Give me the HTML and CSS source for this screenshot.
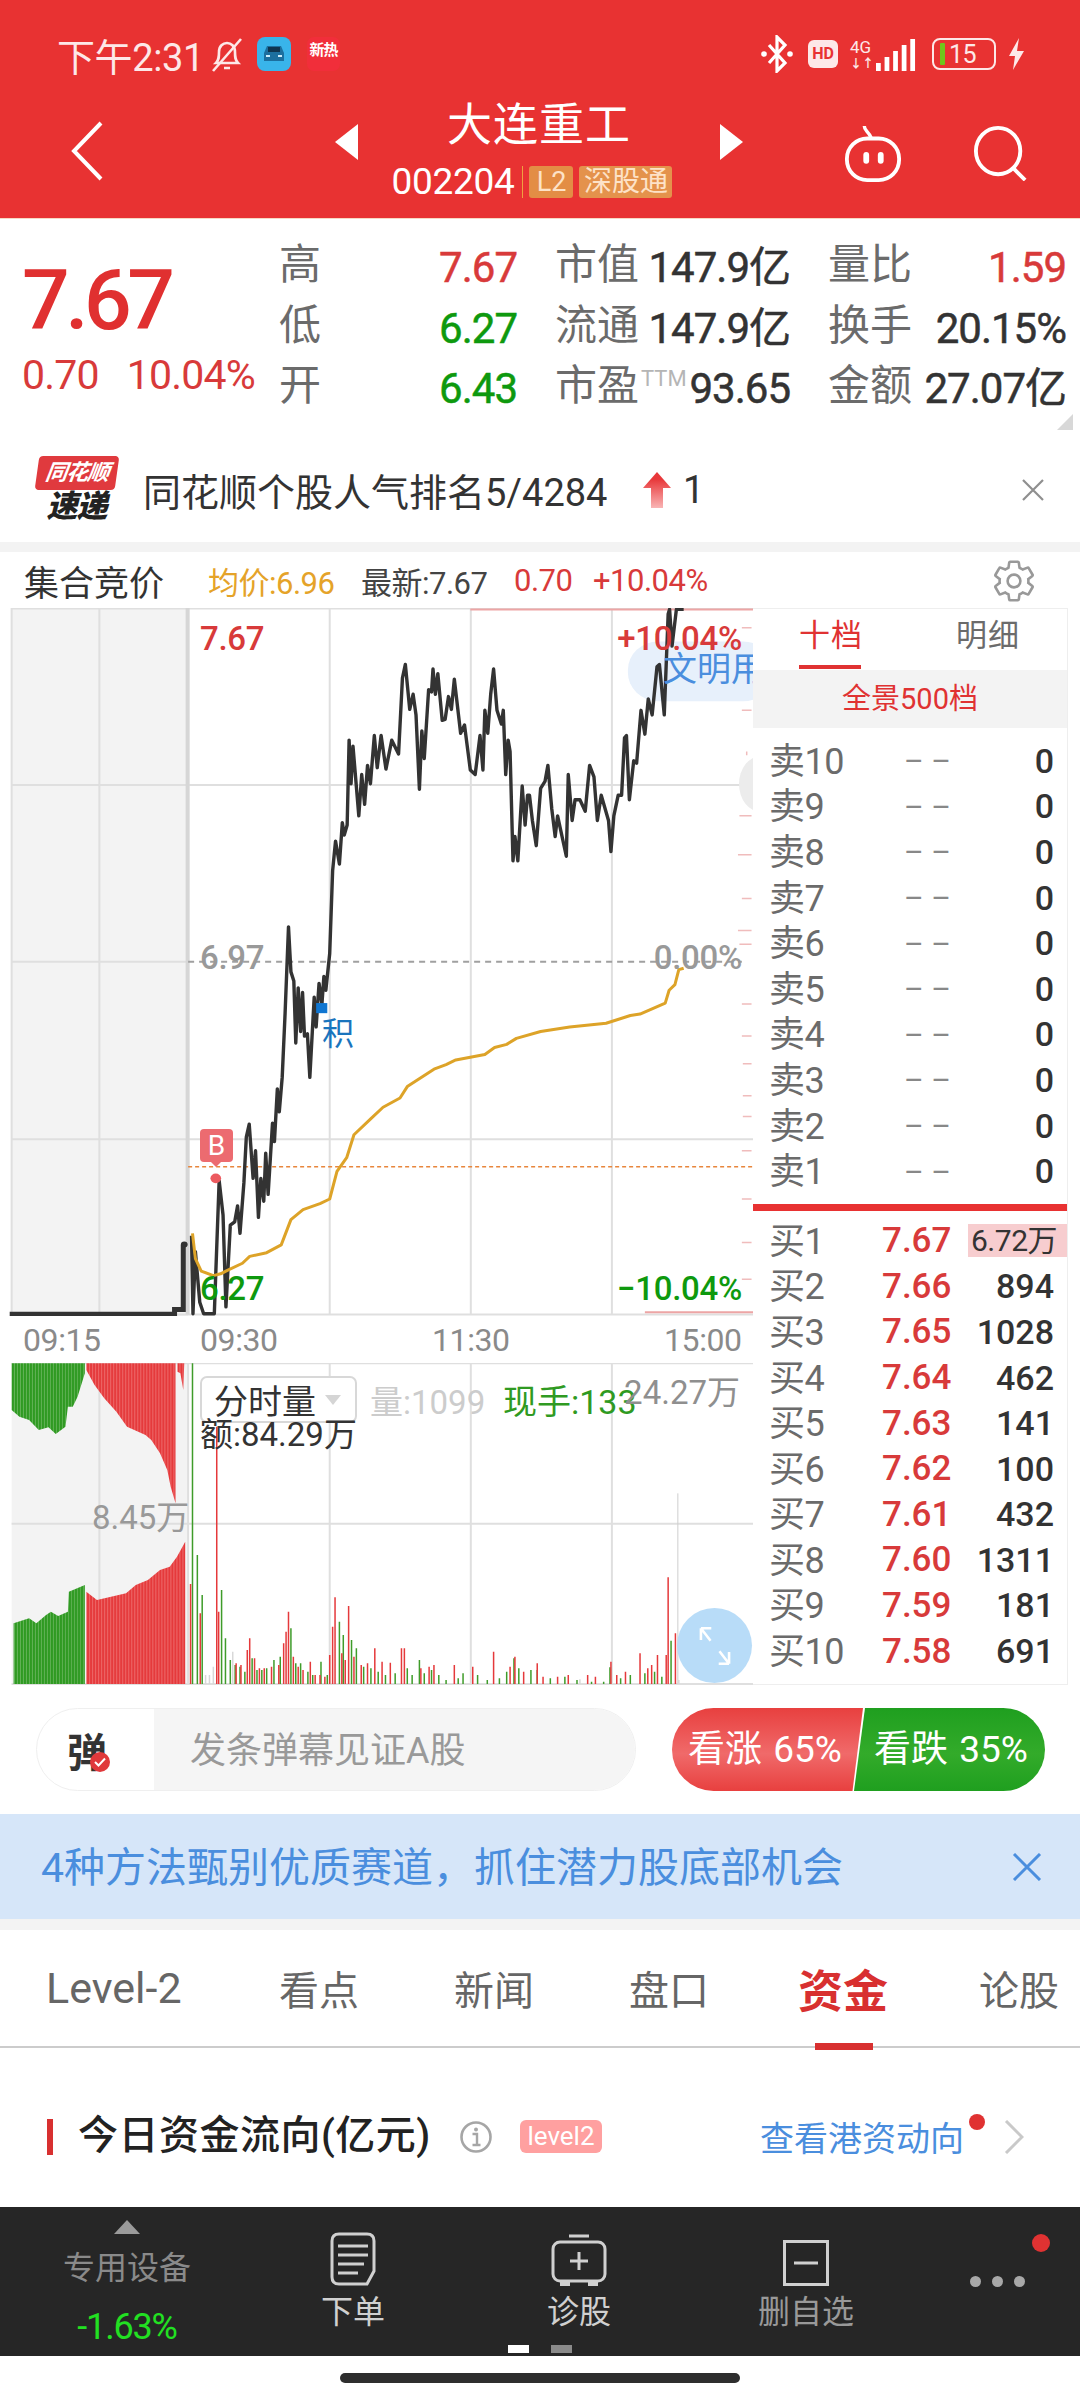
FILE: index.html
```html
<!DOCTYPE html>
<html lang="zh-CN">
<head>
  <meta charset="UTF-8" />
  <meta name="viewport" content="width=device-width, initial-scale=1.0"/>
  <title>大连重工</title>
  <link rel="stylesheet" href="styles.css">
</head>
<body>
<div class="page">

  <header class="top">
    <div class="status">
      <div class="status-left">
        <span class="clock">下午2:31</span>
        <svg class="bell" viewBox="0 0 34 36"><path d="M6 27c3-3 3-6 3-11 0-6 4-9 8-9s8 3 8 9c0 5 0 8 3 11z M14 32h6" fill="none" stroke="#fde8e8" stroke-width="2.6"/><path d="M3 35 31 3" stroke="#fde8e8" stroke-width="2.6"/></svg>
        <svg class="app-icon" viewBox="0 0 34 34"><rect width="34" height="34" rx="8" fill="#39b4ea"/><path d="M7 16l3-7h14l3 7v8H7z" fill="#1c6f9f"/><rect x="11" y="10" width="12" height="5" fill="#0f3550"/><rect x="9" y="18" width="4" height="2" fill="#cfeefc"/><rect x="21" y="18" width="4" height="2" fill="#cfeefc"/></svg>
        <span class="app-hot">新热</span>
      </div>
      <div class="status-right">
        <svg class="bt" viewBox="0 0 34 38"><path d="M9 10l16 18-8 8V2l8 8-16 18" fill="none" stroke="#fff" stroke-width="3.2"/><circle cx="4" cy="19" r="2.8" fill="#fff"/><circle cx="30" cy="19" r="2.8" fill="#fff"/></svg>
        <span class="hd">HD</span>
        <span class="net"><i>4G</i><b>↓↑</b></span>
        <svg class="signal" viewBox="0 0 42 32" preserveAspectRatio="none"><rect x="0" y="24" width="5" height="8" fill="#fff"/><rect x="9" y="18" width="5" height="14" fill="#fff"/><rect x="18" y="12" width="5" height="20" fill="#fff"/><rect x="27" y="6" width="5" height="26" fill="#fff"/><rect x="36" y="0" width="5" height="32" fill="#fff"/></svg>
        <span class="battery"><i></i>15</span>
        <svg class="bolt" viewBox="0 0 17 32"><path d="M11 0 1 18h6l-2 14 11-19H9z" fill="#fde8e8"/></svg>
      </div>
    </div>
    <nav class="nav">
      <svg class="back" viewBox="0 0 34 60"><path d="M31 2 4 30l27 28" fill="none" stroke="#fff" stroke-width="4"/></svg>
      <div class="stock-head">
        <svg class="tri" viewBox="0 0 23 36"><path d="M23 0v36L0 18z" fill="#fff"/></svg>
        <div class="stock-id">
          <div class="stock-name">大连重工</div>
          <div class="stock-code"><span>002204</span><em>L2</em><em>深股通</em></div>
        </div>
        <svg class="tri" viewBox="0 0 23 36"><path d="M0 0v36l23-18z" fill="#fff"/></svg>
      </div>
      <div class="nav-right">
        <svg class="robot" viewBox="0 0 60 60"><path d="M21 1c0 5 4 5 7 12" fill="none" stroke="#fff" stroke-width="3.5"/><rect x="3" y="14" width="54" height="43" rx="21" fill="none" stroke="#fff" stroke-width="4"/><rect x="20" y="28" width="6" height="12" rx="3" fill="#fff"/><rect x="35" y="28" width="6" height="12" rx="3" fill="#fff"/></svg>
        <svg class="search" viewBox="0 0 58 58"><ellipse cx="26" cy="27" rx="23" ry="24" fill="none" stroke="#fff" stroke-width="4"/><path d="M41 44l13 13" stroke="#fff" stroke-width="4"/></svg>
      </div>
    </nav>
  </header>

  <section class="quote">
    <div class="quote-main">
      <div class="quote-price">7.67</div>
      <div class="quote-change"><span>0.70</span><span>10.04%</span></div>
    </div>
    <div class="quote-grid">
      <div class="cell"><label>高</label><b class="up">7.67</b></div>
      <div class="cell"><label>市值</label><b>147.9亿</b></div>
      <div class="cell"><label>量比</label><b class="up">1.59</b></div>
      <div class="cell"><label>低</label><b class="down">6.27</b></div>
      <div class="cell"><label>流通</label><b>147.9亿</b></div>
      <div class="cell"><label>换手</label><b>20.15%</b></div>
      <div class="cell"><label>开</label><b class="down">6.43</b></div>
      <div class="cell"><label>市盈<sup>TTM</sup></label><b>93.65</b></div>
      <div class="cell"><label>金额</label><b>27.07亿</b></div>
    </div>
    <i class="corner"></i>
  </section>

  <section class="ticker">
    <div class="logo"><span class="logo-tag">同花顺</span><span class="logo-sub">速递</span></div>
    <span class="ticker-text">同花顺个股人气排名5/4284</span>
    <svg class="rank-arrow" viewBox="0 0 28 36"><defs><linearGradient id="rank" x1="0" y1="0" x2="0" y2="1"><stop offset="0.2" stop-color="#e8383a"/><stop offset="1" stop-color="#f9b5b5"/></linearGradient></defs><path d="M14 0l14 16H20v20H8V16H0z" fill="url(#rank)"/></svg>
    <span class="rank-num">1</span>
    <svg class="close-x" viewBox="0 0 24 22"><path d="M2 1l20 20M22 1 2 21" stroke="#8f8f8f" stroke-width="2.2"/></svg>
  </section>

  <div class="strip"></div>

  <section class="chart-info">
    <span class="auction">集合竞价</span>
    <span class="avg">均价:6.96</span>
    <span class="last">最新:7.67</span>
    <span class="chg">0.70</span>
    <span class="chg">+10.04%</span>
    <svg class="gear" viewBox="0 0 24 24"><path d="M19.14 12.94c.04-.3.06-.61.06-.94 0-.32-.02-.64-.07-.94l2.03-1.58a.49.49 0 0 0 .12-.61l-1.92-3.32a.488.488 0 0 0-.59-.22l-2.39.96c-.5-.38-1.03-.7-1.62-.94l-.36-2.54a.484.484 0 0 0-.48-.41h-3.84c-.24 0-.43.17-.47.41l-.36 2.54c-.59.24-1.13.57-1.62.94l-2.39-.96c-.22-.08-.47 0-.59.22L2.74 8.87c-.12.21-.08.47.12.61l2.03 1.58c-.05.3-.09.63-.09.94s.02.64.07.94l-2.03 1.58a.49.49 0 0 0-.12.61l1.92 3.32c.12.22.37.29.59.22l2.39-.96c.5.38 1.03.7 1.62.94l.36 2.54c.05.24.24.41.48.41h3.84c.24 0 .44-.17.47-.41l.36-2.54c.59-.24 1.13-.56 1.62-.94l2.39.96c.22.08.47 0 .59-.22l1.92-3.32c.12-.22.07-.47-.12-.61l-2.01-1.58z" fill="none" stroke="#999" stroke-width="1.3"/><circle cx="12" cy="12" r="3.2" fill="none" stroke="#999" stroke-width="1.3"/></svg>
  </section>

  <section class="market">
    <div class="charts">

      <div class="price-chart">
        <svg class="plot" viewBox="0 17 1553 1543" preserveAspectRatio="none">
          <rect x="24" y="17" width="364" height="1543" fill="#f3f3f3"/>
          <g class="grid">
            <path d="M24 18H1553M24 403H1553M24 1175H1553M24 1557H1553"/>
            <path d="M24 788H388"/>
            <path d="M24 17V1557M205 17V1557M388 17V1557M680 17V1557M971 17V1557M1262 17V1557"/>
            <path class="grid-strong" d="M387 17V1557"/>
          </g>
          <path class="limit" d="M970 20H1553M1330 1552H1553"/>
          <rect x="1295" y="90" width="300" height="130" rx="62" fill="#e7f0fb"/>
          <path class="ticks" d="M1530 60h20M1540 140v10M1530 240h20M1540 330v8M1525 470h25M1522 555h28M1530 650h20M1522 720h28M1525 750h25M1530 880h20M1530 950h20M1532 1010h18M1532 1080h18M1532 1125h18M1530 1200h20M1530 1305h20M1530 1400h20M1530 1480h20"/>
          <rect x="1556" y="1315" width="12" height="18" fill="#e83232"/>
          <path class="ref-line" d="M388 788H1530"/>
          <path class="cost-line" d="M388 1235H1553"/>
          <path class="pre-line" d="M20 1556H360V1546H378V1405"/>
          <path class="price-line" d="M395 1385 398 1555 403 1420 412 1530 420 1555 442 1555 452 1265 460 1340 466 1540 475 1362 484 1355 490 1320 495 1380 503 1270 508 1170 514 1142 522 1260 527 1200 533 1345 538 1260 544 1310 548 1205 553 1295 562 1140 566 1180 572 1065 576 1115 582 1040 588 900 595 712 600 810 606 830 610 965 615 845 620 940 624 855 628 950 634 945 639 1040 648 865 652 930 658 835 664 880 668 820 672 850 680 770 686 590 692 525 700 575 706 485 710 512 716 490 720 305 724 400 728 318 740 470 746 380 752 445 758 360 764 400 772 295 778 365 786 295 796 368 808 305 822 335 830 170 836 140 845 238 852 205 858 250 865 412 870 285 875 345 884 195 890 200 893 150 898 205 903 160 912 262 918 260 925 210 931 238 937 172 950 290 958 272 970 370 980 380 990 295 996 370 1000 240 1006 290 1012 205 1018 150 1025 240 1034 270 1038 240 1043 380 1048 305 1052 330 1058 568 1062 515 1068 568 1077 405 1083 490 1088 425 1092 425 1098 480 1106 535 1115 410 1124 395 1130 360 1138 455 1145 515 1150 470 1168 558 1172 380 1180 480 1186 435 1196 435 1207 460 1216 360 1225 385 1232 480 1240 425 1255 480 1260 548 1266 470 1275 425 1282 425 1288 300 1292 295 1298 435 1307 350 1313 355 1322 240 1330 292 1337 215 1345 250 1355 145 1360 140 1370 250 1378 30 1381 20 1386 100 1395 20 1410 20"/>
          <path class="avg-line" d="M397 1380 403 1435 415 1462 440 1472 455 1468 470 1460 500 1445 515 1430 550 1422 580 1405 600 1350 625 1328 660 1315 680 1305 695 1245 715 1215 730 1165 765 1130 790 1105 825 1085 840 1060 895 1022 920 1012 940 1002 1000 990 1020 975 1045 968 1065 955 1115 940 1175 930 1250 922 1300 905 1320 902 1372 878 1380 850 1392 838 1400 805 1410 802"/>
          <ellipse cx="445" cy="1260" rx="11" ry="10.5" fill="#ec5a5f"/>
          <ellipse cx="380" cy="1404" rx="7" ry="6.5" fill="#333"/>
          <rect x="652" y="878" width="23" height="22" fill="#1076d1"/>
        </svg>
        <i class="side-knob"></i>
        <span class="float-pill">文明用</span>
        <span class="tag tag-hi-price">7.67</span>
        <span class="tag tag-hi-pct">+10.04%</span>
        <span class="tag tag-mid-price">6.97</span>
        <span class="tag tag-mid-pct">0.00%</span>
        <span class="tag tag-lo-price">6.27</span>
        <span class="tag tag-lo-pct">−10.04%</span>
        <span class="buy-mark">B</span>
        <span class="accum">积</span>
      </div>

      <div class="time-axis"><span>09:15</span><span>09:30</span><span>11:30</span><span>15:00</span></div>

      <div class="volume-chart">
        <svg class="plot" viewBox="0 159 1553 966" preserveAspectRatio="none">
          <defs>
            <pattern id="stripeGreen" width="6.2" height="10" patternUnits="userSpaceOnUse"><rect width="6.2" height="10" fill="#6cb761"/><rect width="4.4" height="10" fill="#2f9a22"/></pattern>
            <pattern id="stripeRed" width="6.2" height="10" patternUnits="userSpaceOnUse"><rect width="6.2" height="10" fill="#f07a7a"/><rect width="4.4" height="10" fill="#e5393b"/></pattern>
          </defs>
          <rect x="24" y="159" width="364" height="966" fill="#f3f3f3"/>
          <g class="grid">
            <path d="M24 641H1553M24 1122H1553M24 160H1553"/>
            <path d="M205 159V1122M388 159V1122M680 159V1122M971 159V1122M1262 159V1122"/>
          </g>
          <path fill="url(#stripeGreen)" d="M24 160H175V190L160 260 150 290H140L135 350 115 372 100 352 80 360 60 330 40 320 24 300Z"/>
          <path fill="url(#stripeRed)" d="M178 160H362V580L352 530 345 480 330 430 312 390 300 375 262 350 240 305 215 265 195 225 178 180Z"/>
          <path fill="url(#stripeRed)" d="M366 160H380L378 240 372 190 366 185Z"/>
          <path fill="url(#stripeGreen)" d="M28 1122V940L60 925 75 940 95 915 105 905 120 918 140 905 142 845 175 825V1122Z"/>
          <path fill="url(#stripeRed)" d="M178 1122V845L200 870 260 850 280 825 305 810 330 780 350 770 365 740 382 695V1122Z"/>
          <path class="vol-line" d="M1398 550V1122"/>
          <path class="vol-soft" d="M424 1095V1122M432 1095V1122M440 1070V1122M480 1025V1122M1196 1108V1122M1400 1110V1122"/>
          <path class="vol-green" d="M397 160V1122M407 735V1122M417 855V1122M457 840V1122M465 985V1122M475 1050V1122M485 1065V1122M495 1070V1122M505 1085V1122M520 1045V1122M530 1080V1122M540 1080V1122M550 1075V1122M565 1050V1122M578 1040V1122M600 955V1122M610 1060V1122M620 1060V1122M635 1085V1122M645 1095V1122M662 1055V1122M675 1095V1122M700 935V1122M708 975V1122M725 990V1122M735 1015V1122M750 1070V1122M765 1075V1122M780 1085V1122M795 1095V1122M815 1090V1122M840 1075V1122M850 1095V1122M865 1050V1122M875 1090V1122M890 1080V1122M905 1095V1122M920 1110V1122M945 1105V1122M955 1090V1122M985 1095V1122M1005 1110V1122M1030 1105V1122M1045 1085V1122M1060 1045V1122M1070 1075V1122M1095 1080V1122M1108 1080V1122M1135 1105V1122M1165 1100V1122M1190 1110V1122M1220 1115V1122M1245 1115V1122M1258 1072V1122M1280 1105V1122M1300 1095V1122M1330 1090V1122M1350 1085V1122M1365 1100V1122M1384 992V1122"/>
          <path class="vol-red" d="M393 822V1122M413 910V1122M447 350V1122M451 905V1122M487 1060V1122M497 1065V1122M510 1020V1122M515 985V1122M525 1045V1122M535 1075V1122M545 1075V1122M560 1070V1122M575 1065V1122M585 1000V1122M590 965V1122M595 905V1122M605 1040V1122M615 1070V1122M625 1080V1122M640 1055V1122M650 1095V1122M660 1095V1122M670 1100V1122M680 1035V1122M686 950V1122M691 862V1122M705 1030V1122M712 1050V1122M719 888V1122M730 1040V1122M745 1065V1122M758 1060V1122M773 1015V1122M788 1055V1122M805 1058V1122M828 1015V1122M834 1015V1122M868 1075V1122M885 1070V1122M895 1065V1122M937 1065V1122M975 1070V1122M1018 1025V1122M1052 1070V1122M1062 1040V1122M1080 1085V1122M1108 1060V1122M1120 1100V1122M1150 1100V1122M1172 1095V1122M1212 1095V1122M1228 1100V1122M1260 1055V1122M1272 1095V1122M1290 1085V1122M1320 1030V1122M1336 1075V1122M1344 1065V1122M1356 1035V1122M1374 1035V1122M1378 802V1122M1393 970V1122"/>
        </svg>
        <div class="vol-head">
          <span class="vol-select">分时量<i></i></span>
          <span class="vol-qty">量:1099</span>
          <span class="vol-hand">现手:133</span>
        </div>
        <span class="vol-amount">额:84.29万</span>
        <span class="vol-top">24.27万</span>
        <span class="vol-mid">8.45万</span>
        <span class="expand">
          <svg viewBox="0 0 44 54"><path d="M3 3h14M3 3v16M3 3l13 17M41 51H27M41 51V35M41 51 28 34" fill="none" stroke="#fff" stroke-width="3.5"/></svg>
        </span>
      </div>
    </div>

    <aside class="book">
      <div class="book-tabs"><span class="book-tab active">十档</span><span class="book-tab">明细</span></div>
      <div class="book-band">全景500档</div>
      <div class="book-rows sell">
        <div class="row"><span>卖10</span><em>– –</em><b>0</b></div>
        <div class="row"><span>卖9</span><em>– –</em><b>0</b></div>
        <div class="row"><span>卖8</span><em>– –</em><b>0</b></div>
        <div class="row"><span>卖7</span><em>– –</em><b>0</b></div>
        <div class="row"><span>卖6</span><em>– –</em><b>0</b></div>
        <div class="row"><span>卖5</span><em>– –</em><b>0</b></div>
        <div class="row"><span>卖4</span><em>– –</em><b>0</b></div>
        <div class="row"><span>卖3</span><em>– –</em><b>0</b></div>
        <div class="row"><span>卖2</span><em>– –</em><b>0</b></div>
        <div class="row"><span>卖1</span><em>– –</em><b>0</b></div>
      </div>
      <div class="book-divider"></div>
      <div class="book-rows buy">
        <div class="row"><span>买1</span><strong>7.67</strong><b class="book-hot">6.72万</b></div>
        <div class="row"><span>买2</span><strong>7.66</strong><b>894</b></div>
        <div class="row"><span>买3</span><strong>7.65</strong><b>1028</b></div>
        <div class="row"><span>买4</span><strong>7.64</strong><b>462</b></div>
        <div class="row"><span>买5</span><strong>7.63</strong><b>141</b></div>
        <div class="row"><span>买6</span><strong>7.62</strong><b>100</b></div>
        <div class="row"><span>买7</span><strong>7.61</strong><b>432</b></div>
        <div class="row"><span>买8</span><strong>7.60</strong><b>1311</b></div>
        <div class="row"><span>买9</span><strong>7.59</strong><b>181</b></div>
        <div class="row"><span>买10</span><strong>7.58</strong><b>691</b></div>
      </div>
    </aside>
  </section>

  <section class="comment-bar">
    <div class="danmu">
      <div class="danmu-mark">弹<i><svg viewBox="0 0 12 10"><path d="M1 5l3.5 3.5L11 1.5" fill="none" stroke="#fff" stroke-width="2"/></svg></i></div>
      <div class="danmu-input">发条弹幕见证A股</div>
    </div>
    <div class="vote">
      <span class="vote-up">看涨 65%</span>
      <span class="vote-down">看跌 35%</span>
    </div>
  </section>

  <section class="banner">
    <span>4种方法甄别优质赛道，抓住潜力股底部机会</span>
    <svg viewBox="0 0 30 28"><path d="M2 1l26 26M28 1 2 27" stroke="#4a8ede" stroke-width="3"/></svg>
  </section>

  <div class="strip strip-thin"></div>

  <nav class="tabs">
    <span class="tab tab-level">Level-2</span>
    <span class="tab tab-view">看点</span>
    <span class="tab tab-news">新闻</span>
    <span class="tab tab-pan">盘口</span>
    <span class="tab tab-fund">资金</span>
    <span class="tab tab-talk">论股</span>
  </nav>

  <section class="fund-head">
    <span class="fund-title">今日资金流向(亿元)</span>
    <svg class="info" viewBox="0 0 34 34"><circle cx="17" cy="17" r="14.5" fill="none" stroke="#a6a6a6" stroke-width="2.6"/><circle cx="17" cy="9.5" r="2" fill="#a6a6a6"/><path d="M13.5 14h4.5v11M13.5 25h8" fill="none" stroke="#a6a6a6" stroke-width="2.4"/></svg>
    <span class="level-badge">level2</span>
    <span class="fund-link">查看港资动向<i></i></span>
    <svg class="chevron" viewBox="0 0 20 34"><path d="M2 1l16 16L2 33" fill="none" stroke="#c9c9c9" stroke-width="3"/></svg>
  </section>

  <footer class="actions">
    <div class="act-stock">
      <i class="act-tri"></i>
      <span class="act-name">专用设备</span>
      <span class="act-pct">-1.63%</span>
    </div>
    <div class="act">
      <svg width="46" height="54" viewBox="0 0 46 54"><path d="M9 2h28q7 0 7 7v30l-7 13H9q-7 0-7-7V9q0-7 7-7z" fill="none" stroke="#d0d0d0" stroke-width="3"/><path d="M8 14h30M8 23h30M8 32h26M8 41h20" stroke="#d0d0d0" stroke-width="3"/></svg>
      <span>下单</span>
    </div>
    <div class="act">
      <svg width="56" height="52" viewBox="0 0 56 52"><path d="M18 2h20" stroke="#d0d0d0" stroke-width="3"/><rect x="2" y="8" width="52" height="39" rx="7" fill="none" stroke="#d0d0d0" stroke-width="3"/><path d="M28 18v18M19 27h18" stroke="#d0d0d0" stroke-width="3"/><path d="M9 47h10v5H9zM37 47h10v5H37z" fill="#d0d0d0"/></svg>
      <span>诊股</span>
    </div>
    <div class="act act-dim">
      <svg width="46" height="46" viewBox="0 0 46 46"><rect x="1.5" y="1.5" width="43" height="43" fill="none" stroke="#d0d0d0" stroke-width="3"/><path d="M11 23h24" stroke="#d0d0d0" stroke-width="3"/></svg>
      <span>删自选</span>
    </div>
    <div class="act-more"><i></i><i></i><i></i><em></em></div>
    <div class="pager"><i class="on"></i><i></i></div>
  </footer>

  <div class="home-bar"><i></i></div>
</div>
</body>
</html>
```

FILE: styles.css
```css
* {
  box-sizing: border-box;
}

body {
  margin: 0;
  background: #fff;
  font-family: Roboto, "Noto Sans CJK SC", sans-serif;
  color: #333;
}

i, em {
  font-style: normal;
}

.page {
  width: 1080px;
  height: 2400px;
  overflow: hidden;
  position: relative;
}

/* header */
.top {
  height: 219px;
  background: #e83232;
  color: #fff;
  border-bottom: 1px solid #f7d9c4;
}

.status {
  height: 88px;
  padding: 20px 55px 0 57px;
  display: flex;
  align-items: center;
  justify-content: space-between;
}

.status-left, .status-right {
  display: flex;
  align-items: center;
}

.clock {
  font-size: 38px;
  letter-spacing: -0.4px;
  color: #fde8e8;
  width: 153px;
  white-space: nowrap;
}

.bell {
  width: 34px;
  height: 36px;
}

.app-icon {
  width: 34px;
  height: 34px;
  margin-left: 13px;
}

.app-hot {
  width: 33px;
  height: 34px;
  margin-left: 16px;
  background: #f12e3a;
  border-radius: 7px;
  font-size: 15px;
  font-weight: 700;
  line-height: 26px;
  text-align: center;
  white-space: nowrap;
  letter-spacing: -1px;
}

.bt {
  width: 34px;
  height: 38px;
}

.hd {
  margin-left: 14px;
  width: 30px;
  height: 28px;
  background: #fde8e8;
  border-radius: 6px;
  color: #e83232;
  font-size: 16px;
  font-weight: 700;
  line-height: 28px;
  text-align: center;
}

.net {
  margin-left: 12px;
  width: 26px;
  display: flex;
  flex-direction: column;
  font-size: 15px;
  line-height: 15px;
  color: #fde8e8;
}

.net i {
  font-size: 17px;
  line-height: 20px;
}

.net b {
  font-size: 12px;
}

.signal {
  width: 40px;
  height: 32px;
  margin-top: 2px;
}

.battery {
  margin-left: 16px;
  width: 64px;
  height: 32px;
  border: 2px solid #fde8e8;
  border-radius: 8px;
  display: flex;
  align-items: center;
  gap: 4px;
  padding-left: 6px;
  font-size: 25px;
  color: #fde8e8;
  letter-spacing: -0.5px;
}

.battery i {
  width: 5px;
  height: 22px;
  background: #6fc51b;
  border-radius: 1px;
}

.bolt {
  width: 17px;
  height: 32px;
  margin-left: 12px;
}

.nav {
  height: 130px;
  padding: 0 50px 0 70px;
  display: flex;
  align-items: flex-start;
  justify-content: space-between;
}

.back {
  width: 34px;
  height: 60px;
  margin-top: 33px;
}

.stock-head {
  display: flex;
  align-items: center;
  position: absolute;
  left: 335px;
  width: 408px;
  height: 130px;
  justify-content: space-between;
  top: 88px;
}

.tri {
  width: 23px;
  height: 36px;
  margin-top: -22px;
}

.stock-id {
  display: flex;
  flex-direction: column;
  align-items: center;
}

.stock-name {
  font-size: 45px;
  line-height: 56px;
  margin-top: -8px;
  letter-spacing: 1px;
}

.stock-code {
  display: flex;
  align-items: center;
  height: 36px;
  margin-top: 10px;
  margin-right: 14px;
  font-size: 37px;
  white-space: nowrap;
}

.stock-code span {
  padding-right: 8px;
  border-right: 1px solid #f0a040;
  line-height: 32px;
  letter-spacing: -0.3px;
}

.stock-code em {
  margin-left: 6px;
  width: 44px;
  text-align: center;
  height: 32px;
  background: #e38d45;
  border-radius: 3px;
  font-size: 27px;
  line-height: 32px;
  color: #fde2c8;
}

.stock-code em + em {
  width: 93px;
  background: #e4924c;
  font-size: 28px;
}

.nav-right {
  display: flex;
  gap: 69px;
  margin-top: 37px;
}

.robot {
  width: 60px;
  height: 58px;
}

.search {
  width: 58px;
  height: 56px;
}

/* quote */
.quote {
  height: 218px;
  position: relative;
  display: flex;
}

.quote-main {
  width: 279px;
  padding-left: 22px;
}

.quote-price {
  margin-top: 34px;
  font-size: 84px;
  line-height: 96px;
  font-weight: 500;
  color: #e03030;
  letter-spacing: -4.5px;
}

.quote-change {
  margin-top: 1px;
  display: flex;
  gap: 28px;
  font-size: 41px;
  line-height: 50px;
  color: #d83a3a;
  letter-spacing: -0.8px;
}

.quote-grid {
  margin-top: 19px;
  width: 788px;
  display: grid;
  grid-template-columns: 238px 235px 238px;
  grid-auto-rows: 60.5px;
  column-gap: 38px;
}

.cell {
  display: flex;
  align-items: flex-start;
  justify-content: space-between;
  white-space: nowrap;
}

.cell label {
  font-size: 42px;
  line-height: 54px;
  color: #6b6b6b;
}

.cell sup {
  font-size: 22px;
  color: #b5b5b5;
  line-height: 0;
  vertical-align: 14px;
  margin-left: 2px;
}

.cell b {
  font-size: 42px;
  line-height: 60px;
  font-weight: 400;
  color: #333;
  letter-spacing: -1px;
  -webkit-text-stroke: 0.5px currentColor;
}

.cell .up {
  color: #d83a3a;
}

.cell .down {
  color: #0e990e;
}

.corner {
  position: absolute;
  right: 7px;
  bottom: 7px;
  border-left: 16px solid transparent;
  border-bottom: 16px solid #d8d8d8;
}

/* ticker */
.ticker {
  height: 105px;
  display: flex;
  align-items: center;
  padding-left: 36px;
}

.logo {
  width: 81px;
  height: 68px;
  display: flex;
  flex-direction: column;
  align-items: center;
}

.logo-tag {
  width: 80px;
  height: 34px;
  background: #e03a3e;
  border-radius: 4px;
  transform: skewX(-8deg);
  color: #fff;
  font-size: 22px;
  font-weight: 700;
  line-height: 34px;
  text-align: center;
  font-style: italic;
  white-space: nowrap;
  letter-spacing: -1px;
}

.logo-sub {
  font-size: 31px;
  line-height: 34px;
  font-weight: 900;
  font-style: italic;
  color: #222;
  letter-spacing: -1px;
}

.ticker-text {
  margin-left: 26px;
  width: 500px;
  font-size: 38px;
  color: #333;
  white-space: nowrap;
}

.rank-arrow {
  width: 28px;
  height: 36px;
}

.rank-num {
  margin-left: 12px;
  font-size: 38px;
  color: #333;
}

.close-x {
  width: 24px;
  height: 22px;
  margin-left: auto;
  margin-right: 35px;
}

.strip {
  height: 10px;
  background: #f3f3f3;
}

.strip-thin {
  height: 11px;
}

/* info row above the chart */
.chart-info {
  height: 56px;
  display: flex;
  align-items: center;
  padding-left: 24px;
  white-space: nowrap;
}

.auction {
  width: 184px;
  font-size: 35px;
  color: #333;
}

.avg, .last, .chg {
  font-size: 31px;
  letter-spacing: -0.5px;
}

.avg {
  width: 153px;
  color: #e5a329;
}

.last {
  width: 153px;
  color: #444;
}

.chg {
  width: 79px;
  color: #d83a3a;
}

.gear {
  width: 48px;
  height: 48px;
  margin-left: auto;
  margin-right: 42px;
  margin-top: 2px;
}

/* charts and order book */
.market {
  height: 1077px;
  display: flex;
}

.charts {
  width: 753px;
  flex: none;
}

.price-chart {
  height: 708px;
  position: relative;
  overflow: hidden;
}

.plot {
  display: block;
  width: 753px;
  height: 100%;
}

.plot path {
  vector-effect: non-scaling-stroke;
}

.grid path {
  fill: none;
  stroke: #dfdfdf;
  stroke-width: 2px;
}

.grid .grid-strong {
  stroke: #d6d6d6;
  stroke-width: 4px;
}

.limit {
  stroke: #eda5a5;
  stroke-width: 2px;
}

.ticks {
  fill: none;
  stroke: #f0bcbc;
  stroke-width: 1.5px;
}

.ref-line {
  stroke: #a0a0a0;
  stroke-width: 2px;
  stroke-dasharray: 6 5;
}

.cost-line {
  stroke: #e8863c;
  stroke-width: 1.5px;
  stroke-dasharray: 4 3;
}

.avg-line {
  fill: none;
  stroke: #dda328;
  stroke-width: 3px;
  stroke-linejoin: round;
}

.pre-line {
  fill: none;
  stroke: #333;
  stroke-width: 5px;
}

.price-line {
  fill: none;
  stroke: #333;
  stroke-width: 3.4px;
  stroke-linejoin: round;
}

.side-knob {
  position: absolute;
  right: -30px;
  top: 148px;
  width: 44px;
  height: 56px;
  border-radius: 50%;
  background: #ececec;
}

.float-pill {
  position: absolute;
  right: 0;
  top: 33px;
  width: 90px;
  height: 60px;
  color: #4a8ede;
  font-size: 34px;
  line-height: 56px;
  white-space: nowrap;
  overflow: hidden;
}

.tag {
  position: absolute;
  font-size: 33px;
  line-height: 36px;
  white-space: nowrap;
  letter-spacing: -0.3px;
}

.tag-hi-price {
  left: 200px;
  top: 13px;
  color: #d83a3a;
  font-weight: 500;
}

.tag-hi-pct {
  right: 11px;
  top: 13px;
  color: #d83a3a;
  font-weight: 500;
}

.tag-mid-price {
  left: 200px;
  top: 332px;
  color: #999;
  font-weight: 500;
}

.tag-mid-pct {
  right: 11px;
  top: 332px;
  color: #999;
  font-weight: 500;
}

.tag-lo-price {
  left: 200px;
  top: 663px;
  color: #0e990e;
  font-weight: 500;
}

.tag-lo-pct {
  right: 11px;
  top: 663px;
  color: #0e990e;
  font-weight: 500;
}

.buy-mark {
  position: absolute;
  left: 200px;
  top: 521px;
  width: 33px;
  height: 33px;
  border-radius: 4px;
  background: #ec6b70;
  color: #fff;
  font-size: 28px;
  line-height: 33px;
  text-align: center;
}

.buy-mark::after {
  content: "";
  position: absolute;
  left: 11px;
  bottom: -5px;
  border-left: 5px solid transparent;
  border-right: 5px solid transparent;
  border-top: 5px solid #ec6b70;
}

.accum {
  position: absolute;
  left: 322px;
  top: 407px;
  font-size: 32px;
  line-height: 38px;
  color: #1a74bd;
}

.time-axis {
  height: 47px;
  position: relative;
  display: flex;
  align-items: center;
  padding: 0 13px 0 23px;
  font-size: 32px;
  color: #8a8a8a;
}

.time-axis span {
  width: 77px;
  letter-spacing: -0.4px;
}

.time-axis span:nth-child(2) {
  margin-left: 100px;
}

.time-axis span:nth-child(3) {
  margin-left: 155px;
}

.time-axis span:nth-child(4) {
  margin-left: 155px;
}

.volume-chart {
  height: 322px;
  position: relative;
}

.vol-line {
  stroke: #cfcfcf;
  stroke-width: 1px;
}

.vol-soft {
  stroke: #d8d8d8;
  stroke-width: 1.5px;
}

.vol-red {
  stroke: #e5393b;
  stroke-width: 1.5px;
}

.vol-green {
  stroke: #3f9c2a;
  stroke-width: 1.5px;
}

.vol-head {
  position: absolute;
  left: 200px;
  top: 12px;
  display: flex;
  align-items: center;
  white-space: nowrap;
}

.vol-select {
  width: 157px;
  height: 47px;
  padding-left: 12px;
  border: 2px solid #d8d8d8;
  border-radius: 7px;
  background: #fff;
  display: flex;
  align-items: center;
  font-size: 34px;
  color: #333;
}

.vol-select i {
  margin-left: 9px;
  border-left: 8px solid transparent;
  border-right: 8px solid transparent;
  border-top: 10px solid #d5d5d5;
}

.vol-qty {
  margin-left: 13px;
  width: 133px;
  font-size: 33px;
  color: #ccc;
}

.vol-hand {
  font-size: 34px;
  color: #2f9a22;
}

.vol-amount {
  position: absolute;
  left: 200px;
  top: 51px;
  font-size: 33px;
  line-height: 42px;
  color: #333;
  white-space: nowrap;
}

.vol-top {
  position: absolute;
  right: 13px;
  top: 10px;
  font-size: 33px;
  line-height: 40px;
  color: #8f8f8f;
  white-space: nowrap;
}

.vol-mid {
  position: absolute;
  left: 92px;
  top: 135px;
  font-size: 33px;
  line-height: 40px;
  color: #999;
  white-space: nowrap;
}

.expand {
  position: absolute;
  left: 677px;
  top: 245px;
  width: 75px;
  height: 75px;
  border-radius: 50%;
  background: #b8dcf8;
  display: flex;
  align-items: center;
  justify-content: center;
}

.expand svg {
  width: 38px;
  height: 40px;
}

.book {
  width: 315px;
  flex: none;
  border-right: 1px solid #eee;
  border-top: 1px solid #eee;
  border-bottom: 1px solid #eee;
  height: 1077px;
}

.book-tabs {
  height: 61px;
  display: flex;
  padding-left: 46px;
  font-size: 31px;
  color: #6b6b6b;
}

.book-tab {
  width: 62px;
  height: 60px;
  margin-right: 95px;
  text-align: center;
  line-height: 54px;
  white-space: nowrap;
  letter-spacing: 1px;
}

.book-tab.active {
  color: #e03232;
  border-bottom: 4px solid #e03232;
}

.book-band {
  height: 58px;
  background: #f3f3f3;
  color: #e03232;
  font-size: 29px;
  line-height: 58px;
  text-align: center;
}

.book-rows {
  padding: 0 13px 0 16px;
}

.sell {
  margin-top: 10px;
}

.buy {
  margin-top: 7px;
  padding-right: 0;
}

.row {
  height: 45.6px;
  display: flex;
  align-items: center;
  font-size: 36px;
  color: #6b6b6b;
  white-space: nowrap;
}

.row span {
  width: 113px;
  margin-bottom: 6px;
  letter-spacing: -0.5px;
}

.row em {
  width: 60px;
  margin-left: 22px;
  font-size: 30px;
  color: #888;
}

.row strong {
  width: 70px;
  font-size: 35px;
  font-weight: 500;
  color: #d83a3a;
}

.row b {
  margin-left: auto;
  font-size: 34px;
  font-weight: 500;
  color: #333;
}

.buy .row b {
  padding-right: 13px;
}

.buy .row .book-hot {
  width: 99px;
  height: 33px;
  padding: 0 0 0 3px;
  background: #f7cdcf;
  font-size: 30px;
  line-height: 33px;
  font-weight: 400;
  letter-spacing: -0.5px;
}

.book-divider {
  margin-top: 10px;
  height: 7px;
  background: #e83232;
}

/* comment bar */
.comment-bar {
  height: 83px;
  margin-top: 23px;
  padding: 0 35px 0 36px;
  display: flex;
  justify-content: space-between;
}

.danmu {
  width: 600px;
  border: 1px solid #efefef;
  border-radius: 42px;
  display: flex;
  overflow: hidden;
}

.danmu-mark {
  width: 117px;
  padding-left: 30px;
  display: flex;
  align-items: center;
  position: relative;
  font-size: 40px;
  font-weight: 700;
  color: #333;
}

.danmu-mark i {
  position: absolute;
  left: 53px;
  top: 43px;
  width: 20px;
  height: 20px;
  border-radius: 50%;
  background: #e0393b;
  display: flex;
  align-items: center;
  justify-content: center;
}

.danmu-mark svg {
  width: 12px;
  height: 10px;
}

.danmu-input {
  flex: 1;
  padding-left: 36px;
  background: #f5f5f5;
  color: #999;
  font-size: 36px;
  line-height: 85px;
}

.vote {
  width: 373px;
  display: flex;
  border-radius: 42px;
  overflow: hidden;
  color: #fff;
  font-size: 37px;
  line-height: 84px;
  white-space: nowrap;
  word-spacing: 2px;
}

.vote-up {
  width: 191px;
  padding-left: 16px;
  background: linear-gradient(#e8403f, #f06a6a 55%, #e8403f);
  clip-path: polygon(0 0, 100% 0, 94.5% 100%, 0 100%);
}

.vote-down {
  flex: 1;
  margin-left: -9px;
  padding-left: 20px;
  background: linear-gradient(#1f9f1f, #33ab2a 55%, #1f9f1f);
  clip-path: polygon(11px 0, 100% 0, 100% 100%, 0 100%);
}

/* blue banner */
.banner {
  height: 105px;
  margin-top: 23px;
  padding: 0 38px 0 41px;
  background: #d6e6f9;
  color: #4a8ede;
  display: flex;
  align-items: center;
  justify-content: space-between;
  font-size: 41px;
  white-space: nowrap;
}

.banner span {
  margin-bottom: 6px;
}

.banner svg {
  width: 30px;
  height: 28px;
}

/* tabs */
.tabs {
  height: 118px;
  border-bottom: 2px solid #ccc;
  position: relative;
  font-size: 40px;
  color: #666;
  white-space: nowrap;
  display: flex;
  align-items: center;
  padding-left: 46px;
}

.tab-level {
  width: 233px;
  font-size: 43px;
}

.tab-view {
  width: 175px;
}

.tab-news {
  width: 175px;
}

.tab-pan {
  width: 169px;
}

.tab-fund {
  width: 181px;
  font-size: 45px;
  font-weight: 700;
  color: #d83030;
  position: relative;
}

.tab-fund::after {
  content: "";
  position: absolute;
  left: 17px;
  width: 58px;
  height: 7px;
  bottom: -29px;
  background: #d83030;
}

/* fund flow heading */
.fund-head {
  height: 159px;
  padding: 18px 0 0 47px;
  display: flex;
  align-items: center;
  white-space: nowrap;
}

.fund-title {
  padding-left: 25px;
  width: 412px;
  height: 36px;
  border-left: 6px solid #d83030;
  font-size: 40px;
  line-height: 34px;
  color: #222;
  font-weight: 500;
  letter-spacing: 0.5px;
}

.info {
  width: 34px;
  height: 34px;
}

.level-badge {
  margin-left: 27px;
  width: 82px;
  height: 33px;
  border-radius: 6px;
  background: #ffa0a0;
  color: #fff;
  font-size: 26px;
  line-height: 32px;
  text-align: center;
}

.fund-link {
  margin-left: 158px;
  font-size: 34px;
  color: #4a8ede;
  position: relative;
}

.fund-link i {
  position: absolute;
  right: -21px;
  top: 2px;
  width: 16px;
  height: 16px;
  border-radius: 50%;
  background: #e03232;
}

.chevron {
  width: 20px;
  height: 34px;
  margin-left: 40px;
}

/* bottom action bar */
.actions {
  height: 149px;
  position: relative;
  background: #262626;
  color: #d0d0d0;
  display: grid;
  grid-template-columns: 254px 198px 254px 200px 174px;
  white-space: nowrap;
}

.act-stock {
  display: flex;
  flex-direction: column;
  align-items: center;
  padding-top: 13px;
}

.act-tri {
  border-left: 13px solid transparent;
  border-right: 13px solid transparent;
  border-bottom: 14px solid #9a9a9a;
}

.act-name {
  margin-top: 12px;
  font-size: 32px;
  line-height: 44px;
  color: #8a8a8a;
}

.act-pct {
  margin-top: 17px;
  font-size: 36px;
  line-height: 40px;
  color: #22e022;
  letter-spacing: -1.2px;
}

.act {
  display: flex;
  flex-direction: column;
  align-items: center;
  justify-content: flex-end;
  height: 127px;
  font-size: 32px;
  line-height: 44px;
}

.act svg {
  margin-bottom: 4px;
}

.act-dim {
  color: #999;
}

.act-more {
  position: relative;
  display: flex;
  gap: 11px;
  padding: 69px 0 0 64px;
}

.act-more i {
  width: 11px;
  height: 11px;
  border-radius: 50%;
  background: #a8a8a8;
}

.act-more em {
  position: absolute;
  left: 126px;
  top: 27px;
  width: 18px;
  height: 18px;
  border-radius: 50%;
  background: #e03232;
}

.pager {
  position: absolute;
  left: 508px;
  bottom: 3px;
  display: flex;
  gap: 22px;
}

.pager i {
  width: 21px;
  height: 8px;
  background: #8a8a8a;
}

.pager .on {
  background: #fff;
}

.home-bar {
  height: 44px;
  padding-top: 17px;
  display: flex;
  justify-content: center;
}

.home-bar i {
  width: 400px;
  height: 10px;
  border-radius: 5px;
  background: #2e2e2e;
}
```
